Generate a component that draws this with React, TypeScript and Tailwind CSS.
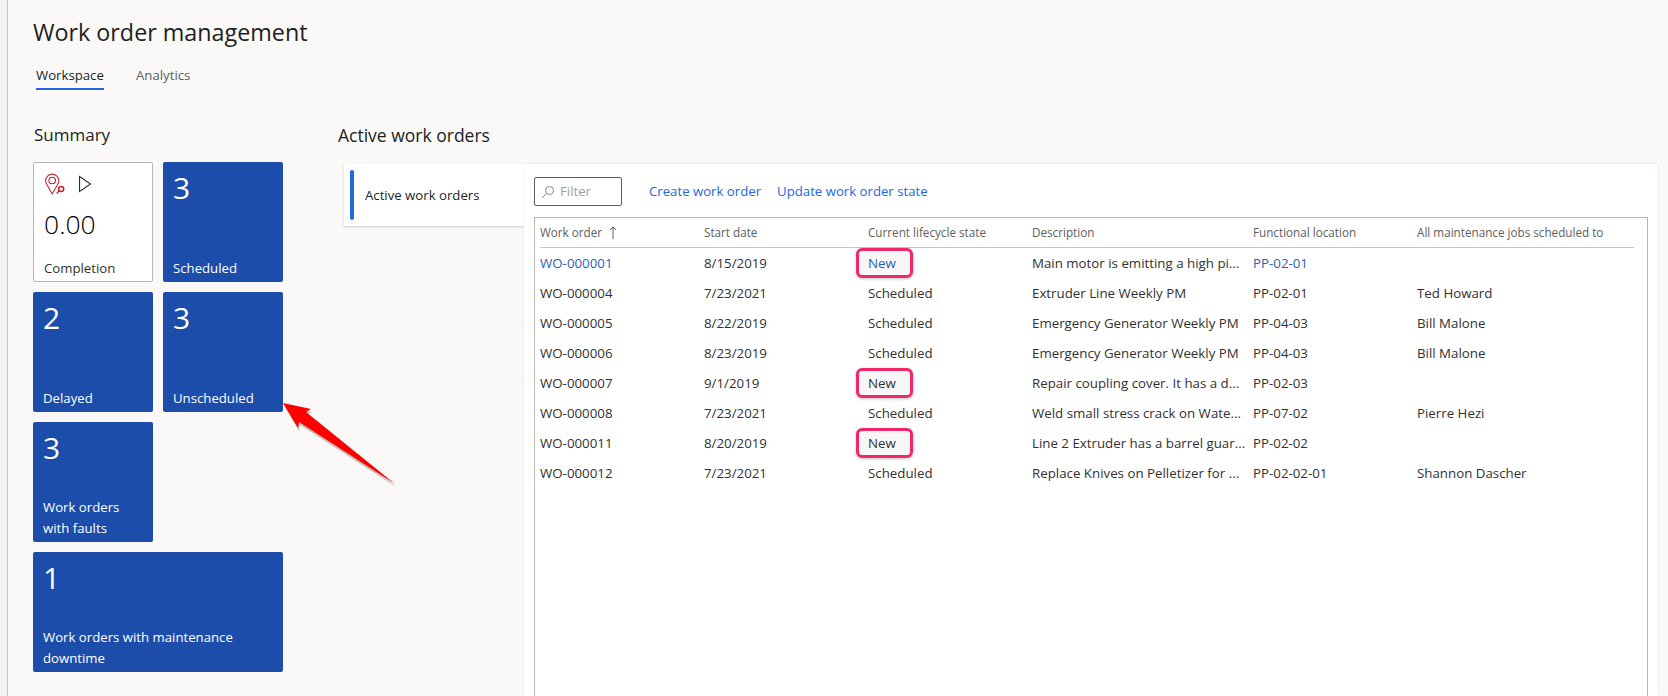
const font = "[font-family:'Open_Sans','Noto_Sans',sans-serif]";

const rows = [
  ["WO-000001", "8/15/2019", "New", "Main motor is emitting a high pi...", "PP-02-01", ""],
  ["WO-000004", "7/23/2021", "Scheduled", "Extruder Line Weekly PM", "PP-02-01", "Ted Howard"],
  ["WO-000005", "8/22/2019", "Scheduled", "Emergency Generator Weekly PM", "PP-04-03", "Bill Malone"],
  ["WO-000006", "8/23/2019", "Scheduled", "Emergency Generator Weekly PM", "PP-04-03", "Bill Malone"],
  ["WO-000007", "9/1/2019", "New", "Repair coupling cover. It has a d...", "PP-02-03", ""],
  ["WO-000008", "7/23/2021", "Scheduled", "Weld small stress crack on Wate...", "PP-07-02", "Pierre Hezi"],
  ["WO-000011", "8/20/2019", "New", "Line 2 Extruder has a barrel guar...", "PP-02-02", ""],
  ["WO-000012", "7/23/2021", "Scheduled", "Replace Knives on Pelletizer for ...", "PP-02-02-01", "Shannon Dascher"],
];

const gridCols = "grid grid-cols-[164px_164px_164px_221px_164px_1fr]";

function Tile({ count, children, wide }: { count: string; children: React.ReactNode; wide?: boolean }) {
  return (
    <div className={`flex h-[120px] flex-col justify-between rounded-[2px] bg-[#1c4daa] pb-[3px] pl-[10px] pr-2 pt-[4px] text-white ${wide ? "col-span-2" : ""}`}>
      <div className="text-[30px] leading-[44px]">{count}</div>
      <div className="text-[13.2px] leading-[21px]">{children}</div>
    </div>
  );
}

function CompletionTile() {
  return (
    <div className="flex h-[120px] flex-col rounded-[2px] border border-[#b8b6b4] bg-white pl-[10px]">
      <div className="mt-[10px] flex h-[22px] items-center gap-[12px]">
        <svg width="22" height="22" viewBox="0 0 20 20" fill="none" stroke="#c4262e" strokeWidth="1">
          <path d="M7.5 19 L2.6 10.5 A6 6 0 1 1 12.4 10.5 Z" />
          <circle cx="7.5" cy="6.8" r="3" />
          <circle cx="15.6" cy="14.5" r="2.3" strokeWidth="1.4" />
          <path d="M13.9 16.2 L11.5 18.6" strokeWidth="1.4" />
        </svg>
        <svg width="14" height="18" viewBox="0 0 14 18" fill="none" stroke="#323130" strokeWidth="1.1">
          <path d="M1.5 1.5 L12.5 9 L1.5 16.5 Z" />
        </svg>
      </div>
      <div className="mt-[11px] text-[26.5px] font-light leading-[36px] text-black">0.00</div>
      <div className="mt-[16px] text-[13.2px] leading-[21px] text-[#323130]">Completion</div>
    </div>
  );
}

function Highlight() {
  return (
    <span className="absolute left-[-12px] top-[-6px] h-[30px] w-[57px] rounded-[6px] border-[3px] border-[#f0286a] bg-[#f3f2f1]/60 shadow-[0_1px_3px_rgba(0,0,0,0.25)]" />
  );
}

export default function App() {
  return (
    <div className={`relative flex h-[696px] w-[1668px] overflow-hidden bg-[#faf9f8] ${font}`}>
      <div className="w-[8px] shrink-0 border-r border-[#c8c6c4] bg-[#f3f2f1]" />
      <div className="flex min-w-0 flex-1 flex-col">
        <div className="pl-[25px] pt-[13px]">
          <h1 className="text-[23.3px] leading-[38px] text-[#201f1e]">Work order management</h1>
          <div className="mt-[14px] flex gap-[32px] pl-[3px] text-[13.2px] leading-[20px]">
            <div className="flex flex-col">
              <span className="text-[#201f1e]">Workspace</span>
              <span className="mt-[3px] h-[2px] w-[68px] bg-[#2266e3]" />
            </div>
            <span className="text-[#605e5c]">Analytics</span>
          </div>
        </div>

        <div className="mt-[33px] flex min-h-0 flex-1">
          <div className="ml-[25px] w-[250px] shrink-0">
            <h2 className="pl-[1px] text-[17px] leading-[24px] text-[#201f1e]">Summary</h2>
            <div className="mt-[15px] grid grid-cols-[120px_120px] gap-[10px]">
              <CompletionTile />
              <Tile count="3">Scheduled</Tile>
              <Tile count="2">Delayed</Tile>
              <Tile count="3">Unscheduled</Tile>
              <Tile count="3">Work orders<br />with faults</Tile>
              <div />
              <Tile count="1" wide>Work orders with maintenance<br />downtime</Tile>
            </div>
          </div>

          <div className="ml-[55px] flex min-w-0 flex-1 flex-col">
            <h2 className="text-[17.5px] leading-[24px] text-[#201f1e]">Active work orders</h2>
            <div className="ml-[6px] mr-[10px] mt-[17px] flex min-h-0 flex-1">
              <div className="w-[180px] shrink-0">
                <div className="flex h-[62px] items-center bg-white pl-[6px] shadow-[0_1px_2px_rgba(0,0,0,0.18)]">
                  <span className="h-[50px] w-[4px] rounded-[2px] bg-[#2266e3]" />
                  <span className="ml-[11px] mt-[2px] text-[13.2px] text-[#201f1e]">Active work orders</span>
                </div>
              </div>
              <div className="flex min-w-0 flex-1 flex-col bg-white pl-[10px] pr-[10px] pt-[13px] shadow-[0_0_2px_rgba(0,0,0,0.12)]">
                <div className="flex items-center">
                  <div className="flex h-[29px] w-[88px] items-center rounded-[2px] border border-[#605e5c] pl-[6px]">
                    <svg width="14" height="14" viewBox="0 0 14 14" fill="none" stroke="#8a8886" strokeWidth="1">
                      <circle cx="8.5" cy="5.5" r="4" />
                      <path d="M5.5 8.5 L1 13" />
                    </svg>
                    <span className="ml-[5px] text-[13.2px] text-[#a19f9d]">Filter</span>
                  </div>
                  <div className="ml-[27px] flex gap-[16px] text-[13.2px] text-[#2266e3]">
                    <span>Create work order</span>
                    <span>Update work order state</span>
                  </div>
                </div>
                <div className="mt-[11px] min-h-0 flex-1 border border-b-0 border-[#b8b6b4] pl-[5px] pr-[13px] text-[13.3px] text-[#323130]">
                  <div className={`${gridCols} h-[30px] items-center border-b border-[#c8c6c4] text-[11.7px] text-[#605e5c]`}>
                    <span className="flex items-center gap-[7px]">
                      Work order
                      <svg width="8" height="13" viewBox="0 0 8 13" fill="none" stroke="#605e5c" strokeWidth="1">
                        <path d="M4 13 V1 M1 4 L4 1 L7 4" />
                      </svg>
                    </span>
                    <span>Start date</span>
                    <span>Current lifecycle state</span>
                    <span>Description</span>
                    <span>Functional location</span>
                    <span>All maintenance jobs scheduled to</span>
                  </div>
                  {rows.map((r, i) => (
                    <div key={r[0]} className={`${gridCols} h-[30px] items-center pt-[2px]`}>
                      <span className={i === 0 ? "text-[#2b5fb8]" : ""}>{r[0]}</span>
                      <span>{r[1]}</span>
                      <span className="relative">
                        {r[2] === "New" && <Highlight />}
                        <span className={`relative ${i === 0 ? "text-[#2b5fb8]" : ""}`}>{r[2]}</span>
                      </span>
                      <span className="whitespace-nowrap">{r[3]}</span>
                      <span className={i === 0 ? "text-[#2b5fb8]" : ""}>{r[4]}</span>
                      <span>{r[5]}</span>
                    </div>
                  ))}
                </div>
              </div>
            </div>
          </div>
        </div>
      </div>

      <svg className="pointer-events-none absolute left-[275px] top-[395px]" width="130" height="100" viewBox="0 0 130 100">
        <path d="M8 8 L36 14 L31 17 L120 89 L24 27 L23 33 Z" fill="#000" opacity="0.22" transform="translate(1 3)" />
        <path d="M8 8 L36 14 L31 17 L120 89 L24 27 L23 33 Z" fill="#fe0000" />
      </svg>
    </div>
  );
}
